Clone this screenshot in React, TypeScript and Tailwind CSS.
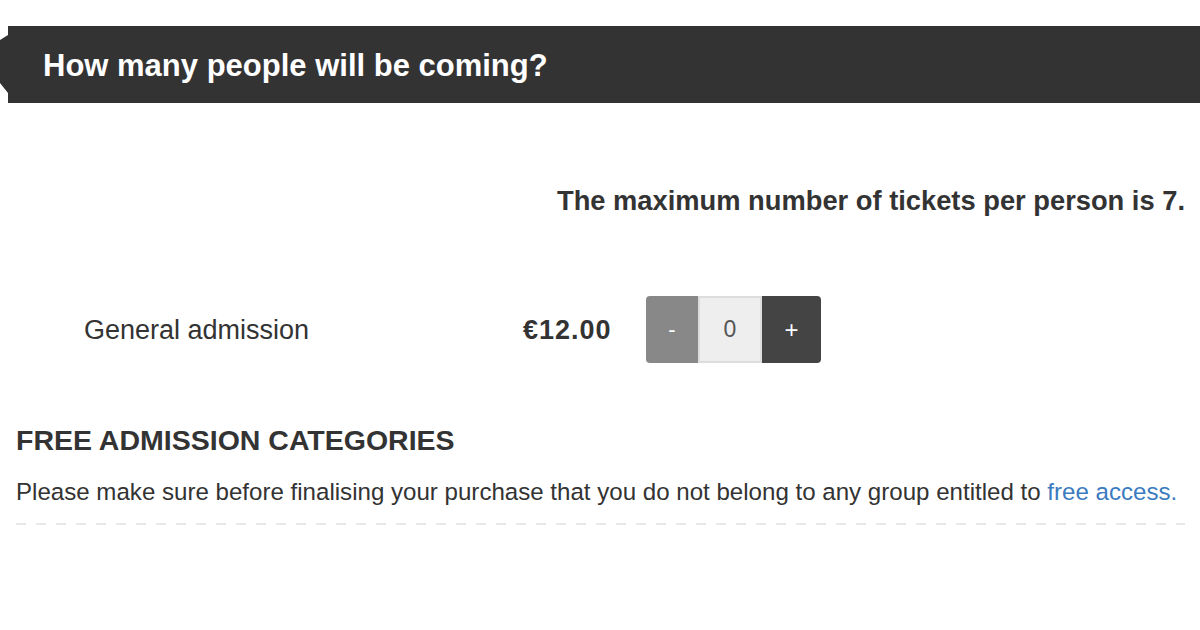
import React from 'react';

const App: React.FC = () => {
  return (
    <div className="w-[1200px] h-[630px] bg-white text-[#333] font-['Liberation_Sans',Arial,sans-serif] overflow-hidden">
      <div className="mt-[26px] h-[77px] bg-[#333] flex items-center pl-[43px] [clip-path:polygon(8px_0,100%_0,100%_100%,8px_100%,8px_67px,0_57px,0_14px,8px_9px)]">
        <h2 className="text-white text-[31px] font-bold leading-none pt-[2px]">How many people will be coming?</h2>
      </div>

      <div className="pr-[15px] pt-[82px] flex justify-end">
        <p className="text-[27.3px] font-bold text-[#333] leading-[31px]">The maximum number of tickets per person is 7.</p>
      </div>

      <div className="mt-[80px] flex items-center">
        <div className="w-[523px] pl-[84px] text-[27px] pt-[2px]">General admission</div>
        <div className="w-[123px] text-[27px] font-bold tracking-[1px] pt-[2px]">€12.00</div>
        <div className="flex h-[67px] rounded-[4px] overflow-hidden">
          <button className="w-[52px] bg-[#888] text-white text-[22px]">-</button>
          <div className="w-[64px] bg-[#eee] border-2 border-[#ddd] flex items-center justify-center text-[23px] text-[#555]">0</div>
          <button className="w-[59px] bg-[#444] text-white text-[24px]">+</button>
        </div>
      </div>

      <div className="px-[16px] mt-[63px]">
        <h3 className="text-[28.5px] font-bold uppercase leading-none">Free admission categories</h3>
        <p className="mt-[23px] text-[24.1px] leading-[28px]">
          Please make sure before finalising your purchase that you do not belong to any group entitled to{' '}
          <a className="text-[#3a7cbf]" href="#">free access.</a>
        </p>
        <div className="mt-[17px] h-[2px] w-[1169px] bg-[repeating-linear-gradient(90deg,#e8e8e8_0_10px,transparent_10px_20px)]" />
      </div>
    </div>
  );
};

export default App;
